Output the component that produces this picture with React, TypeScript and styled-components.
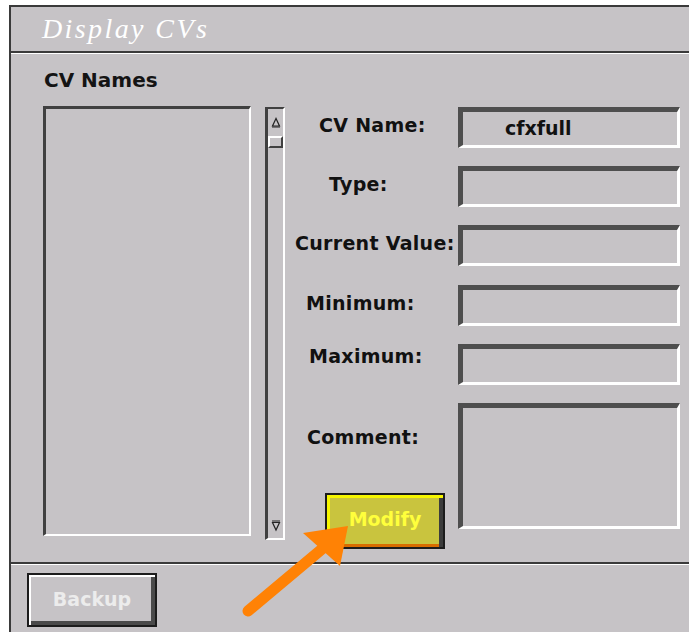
import React from "react";
import styled, { createGlobalStyle } from "styled-components";

const GlobalStyle = createGlobalStyle`
  html, body {
    margin: 0;
    padding: 0;
    background: #ffffff;
    overflow: hidden;
  }
  body {
    font-family: "DejaVu Sans", "Liberation Sans", sans-serif;
  }
`;

const Page = styled.div`
  position: relative;
  width: 689px;
  height: 632px;
  overflow: hidden;
`;

const Window = styled.div`
  margin: 5px 0 0 9px;
  height: 640px;
  background: #c6c3c6;
  border-top: 2px solid #3a3a3a;
  border-left: 2px solid #3a3a3a;
  display: flex;
  flex-direction: column;
`;

const TitleBar = styled.div`
  height: 44px;
  padding-left: 31px;
  border-bottom: 2px solid #3a3a3a;
  box-shadow: 0 1px 0 #ffffff;
  font: italic 28px/44px "Liberation Serif", "DejaVu Serif", serif;
  letter-spacing: 2.4px;
  color: #ffffff;
`;

const SectionLabel = styled.div`
  margin: 17px 0 0 33px;
  font: bold 20px/20px "DejaVu Sans", sans-serif;
  color: #141414;
`;

const Row = styled.div`
  display: flex;
  align-items: flex-start;
  margin-top: 16px;
  padding-left: 32px;
`;

const ListBox = styled.div`
  width: 208px;
  height: 430px;
  box-sizing: border-box;
  border-style: solid;
  border-width: 3px 2px 2px 3px;
  border-color: #404040 #ffffff #ffffff #404040;
`;

const ScrollBar = styled.div`
  margin: 1px 0 0 14px;
  width: 20px;
  height: 433px;
  box-sizing: border-box;
  border-style: solid;
  border-width: 2px 2px 2px 3px;
  border-color: #404040 #ffffff #ffffff #404040;
  display: flex;
  flex-direction: column;
  align-items: center;
  padding: 8px 0 6px;
`;

const Thumb = styled.div`
  margin-top: 8px;
  width: 15px;
  height: 12px;
  box-sizing: border-box;
  border-style: solid;
  border-width: 2px;
  border-color: #ffffff #404040 #404040 #ffffff;
`;

const Spacer = styled.div`
  flex: 1;
`;

const Form = styled.div`
  margin: 1px 0 0 10px;
  display: grid;
  grid-template-columns: 163px 222px;
  row-gap: 18.2px;
  align-items: start;
`;

const Label = styled.div<{ $top: number; $indent: number }>`
  padding-top: ${p => p.$top}px;
  padding-left: ${p => p.$indent}px;
  font: bold 19px/19px "DejaVu Sans", sans-serif;
  letter-spacing: 0.3px;
  color: #111111;
  white-space: nowrap;
`;

const LabelStack = styled.div`
  display: flex;
  flex-direction: column;
  align-items: flex-start;
`;

const Field = styled.div<{ $tall?: boolean }>`
  height: ${p => (p.$tall ? 126 : 41)}px;
  box-sizing: border-box;
  border-style: solid;
  border-width: 5px 3px 3px 5px;
  border-color: #4e4e4e #ffffff #ffffff #4e4e4e;
  padding-left: 42px;
  display: flex;
  align-items: center;
  font: bold 19px/19px "DejaVu Sans", sans-serif;
  color: #111111;
`;

const ModifyButton = styled.div`
  margin: 45.6px 0 0 30px;
  width: 120px;
  height: 56px;
  box-sizing: border-box;
  border: 2px solid #1c1c1c;
  background: #c9c43e;
  box-shadow: inset 3px 3px 0 #f6f600, inset -4px 0 0 #3c3c3c,
    inset 0 -3px 0 #d86c00;
  display: flex;
  align-items: center;
  justify-content: center;
  padding-bottom: 2px;
  font: bold 19px/19px "DejaVu Sans", sans-serif;
  color: #ffff3c;
`;

const Separator = styled.div`
  margin-top: 13px;
  height: 0;
  border-top: 2px solid #3a3a3a;
  border-bottom: 1px solid #ffffff;
`;

const Footer = styled.div`
  padding: 8px 0 0 16px;
`;

const BackupButton = styled.div`
  width: 130px;
  height: 54px;
  box-sizing: border-box;
  border: 2px solid #1c1c1c;
  box-shadow: inset 2px 2px 0 #ffffff, inset -4px -4px 0 #4a4a4a;
  display: flex;
  align-items: center;
  justify-content: center;
  font: bold 19px/19px "DejaVu Sans", sans-serif;
  color: #ececec;
`;

const ArrowMark = styled.svg`
  position: absolute;
  left: 0;
  top: 0;
  width: 689px;
  height: 632px;
  pointer-events: none;
`;

const fields = [
  { label: "CV Name:", indent: 24, top: 9, value: "cfxfull" },
  { label: "Type:", indent: 34, top: 9 },
  { label: "Current Value:", indent: 0, top: 9 },
  { label: "Minimum:", indent: 11, top: 9 },
  { label: "Maximum:", indent: 14, top: 3 },
];

const UpArrow = () => (
  <svg width="10" height="11" viewBox="0 0 10 11">
    <path d="M5 1.5 L1.5 9 H8.5 Z" fill="none" stroke="#222" strokeWidth="1.2" />
    <path d="M1 10 H9" stroke="#222" strokeWidth="1" />
  </svg>
);

const DownArrow = () => (
  <svg width="10" height="12" viewBox="0 0 10 12">
    <path d="M1 1 H9" stroke="#222" strokeWidth="1" />
    <path d="M1.5 2.5 H8.5 L5 10 Z" fill="none" stroke="#222" strokeWidth="1.2" />
  </svg>
);

const App: React.FunctionComponent = () => {
  return (
    <Page>
      <GlobalStyle />
      <Window>
        <TitleBar>Display CVs</TitleBar>
        <SectionLabel>CV Names</SectionLabel>
        <Row>
          <ListBox />
          <ScrollBar>
            <UpArrow />
            <Thumb />
            <Spacer />
            <DownArrow />
          </ScrollBar>
          <Form>
            {fields.map(f => (
              <React.Fragment key={f.label}>
                <Label $top={f.top} $indent={f.indent}>
                  {f.label}
                </Label>
                <Field>{f.value}</Field>
              </React.Fragment>
            ))}
            <LabelStack>
              <Label $top={25.4} $indent={12}>
                Comment:
              </Label>
              <ModifyButton>Modify</ModifyButton>
            </LabelStack>
            <Field $tall />
          </Form>
        </Row>
        <Separator />
        <Footer>
          <BackupButton>Backup</BackupButton>
        </Footer>
      </Window>
      <ArrowMark viewBox="0 0 689 632">
        <line
          x1="248"
          y1="611"
          x2="322"
          y2="549"
          stroke="#ff8205"
          strokeWidth="11"
          strokeLinecap="round"
        />
        <polygon points="348,526 303,533 340,566" fill="#ff8205" />
      </ArrowMark>
    </Page>
  );
};

export default App;
